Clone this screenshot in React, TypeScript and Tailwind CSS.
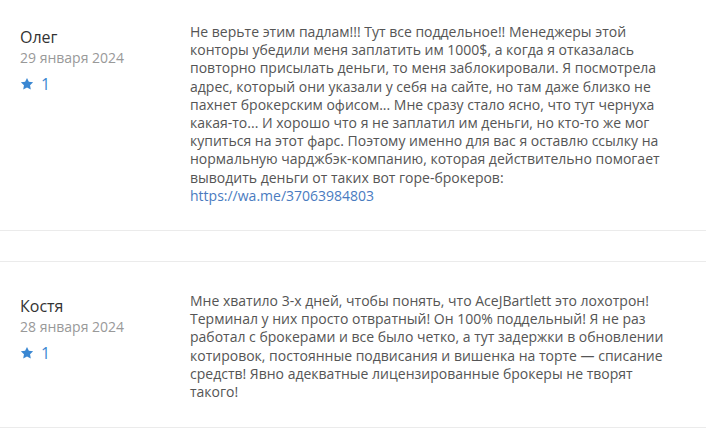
const reviews = [
  {
    name: "Олег",
    date: "29 января 2024",
    rating: 1,
    text: "Не верьте этим падлам!!! Тут все поддельное!! Менеджеры этой конторы убедили меня заплатить им 1000$, а когда я отказалась повторно присылать деньги, то меня заблокировали. Я посмотрела адрес, который они указали у себя на сайте, но там даже близко не пахнет брокерским офисом... Мне сразу стало ясно, что тут чернуха какая-то... И хорошо что я не заплатил им деньги, но кто-то же мог купиться на этот фарс. Поэтому именно для вас я оставлю ссылку на нормальную чарджбэк-компанию, которая действительно помогает выводить деньги от таких вот горе-брокеров:",
    link: "https://wa.me/37063984803",
  },
  {
    name: "Костя",
    date: "28 января 2024",
    rating: 1,
    text: "Мне хватило 3-х дней, чтобы понять, что AceJBartlett это лохотрон! Терминал у них просто отвратный! Он 100% поддельный! Я не раз работал с брокерами и все было четко, а тут задержки в обновлении котировок, постоянные подвисания и вишенка на торте — списание средств! Явно адекватные лицензированные брокеры не творят такого!",
  },
];

function Star() {
  return (
    <svg viewBox="0 0 24 24" className="w-[14px] h-[14px]" fill="#3a87d2">
      <path d="M12 1.5l3.2 6.7 7.3 1-5.3 5.1 1.3 7.3L12 18.1l-6.5 3.5 1.3-7.3-5.3-5.1 7.3-1z" />
    </svg>
  );
}

export default function App() {
  return (
    <div className="w-[706px] h-[435px] overflow-hidden bg-white" style={{ fontFamily: '"Open Sans", sans-serif' }}>
      {reviews.map((r, i) => (
        <div
          key={i}
          className={`flex border-b border-[#ebebeb] pl-[20px] ${i === 0 ? "pt-[23px] pb-[25px]" : "pt-[30px] pb-[26px] border-t mt-[30px]"}`}
        >
          <div className="w-[170px] shrink-0 pt-[4px]">
            <div className="text-[16px] leading-[20px] text-[#333]">{r.name}</div>
            <div className="text-[14px] leading-[22px] text-[#999]">{r.date}</div>
            <div className="flex items-center gap-[7px] mt-[4px] text-[16px] leading-[22px] text-[#3a87d2]">
              <Star />
              <span>{r.rating}</span>
            </div>
          </div>
          <div className="w-[485px] text-[14px] leading-[18.2px] text-[#555]">
            {r.text}
            {r.link && (
              <>
                <br />
                <a href="#" className="text-[#4a7bbf]">{r.link}</a>
              </>
            )}
          </div>
        </div>
      ))}
    </div>
  );
}
